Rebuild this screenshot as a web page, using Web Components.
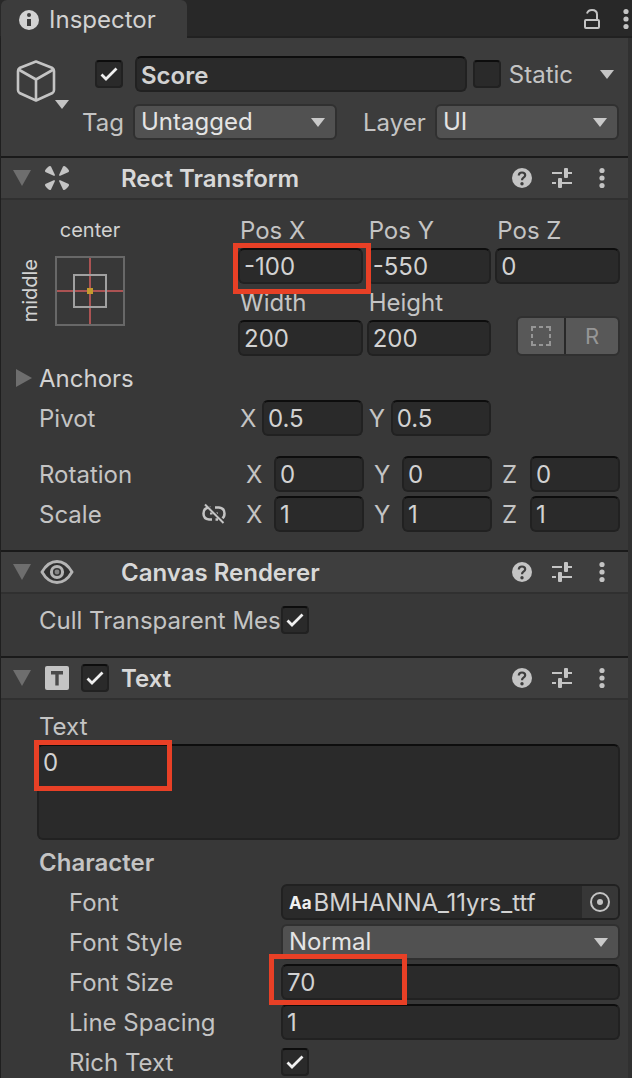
<!DOCTYPE html>
<html lang="en">
<head>
<meta charset="utf-8">
<title>Inspector</title>
<style>
    body {
        margin: 0;
        height: 100vh;
        overflow: hidden;
        background: #383838;
        color: #c4c4c4;
        font: 24px/36px Inter, "Liberation Sans", sans-serif;
    }
</style>
</head>
<body>
<inspector-window></inspector-window>

<script>
const ICONS = {
    info: [20, 20, `<circle cx="10" cy="10" r="10" fill="currentColor"/>
        <path d="M8 9h4v7H8z" fill="#3c3c3c"/><circle cx="10" cy="5" r="2" fill="#3c3c3c"/>`],
    lock: [16, 20, `<path d="M3 4.500Q4 1 8 1Q13 1 13 5.500V10" fill="none" stroke="currentColor" stroke-width="2"/>
        <rect x="1" y="11" width="14" height="8" rx="1" fill="none" stroke="currentColor" stroke-width="2"/>`],
    dots: [20, 20, `<g fill="currentColor"><circle cx="10" cy="2.500" r="2.600"/><circle cx="10" cy="10" r="2.600"/><circle cx="10" cy="17.500" r="2.600"/></g>`],
    cube: [40, 42, `<g fill="none" stroke="currentColor" stroke-width="2.600" stroke-linejoin="round">
        <path d="M21 1.500 37.500 8Q39 9 39 11V30Q39 32 37.500 33L21 40.500 4.500 33Q3 32 3 30V11Q3 9 4.500 8Z"/>
        <path d="M3.500 9.500 21 19.500 38.500 9.500M21 19.500V40"/></g>`],
    caret: [14, 9, `<path d="M0 0H14L7 9Z" fill="currentColor"/>`],
    foldOpen: [18, 16, `<path d="M0 0H18L9 16Z" fill="#6e6e6e"/>`],
    foldClosed: [16, 18, `<path d="M0 0V18L16 9Z" fill="#6e6e6e"/>`],
    rect: [24, 24, `<g fill="currentColor"><path d="M9.300 10 .3 6Q-.8 5 1 3L3 1Q5-.8 6 .5L10 9Z"/>
        <path d="M14.700 10 23.700 6Q24.800 5 23 3L21 1Q19-.8 18 .5L14 9Z"/>
        <path d="M9.300 14 .3 18Q-.8 19 1 21L3 23Q5 24.800 6 23.500L10 15Z"/>
        <path d="M14.700 14 23.700 18Q24.800 19 23 21L21 23Q19 24.800 18 23.500L14 15Z"/></g>`],
    eye: [24, 24, `<g fill="none" stroke="#b4b4b4"><path d="M-3 12Q3 1.500 12 1.500T27 12Q21 22.500 12 22.500T-3 12Z" stroke-width="2.800" fill="#303030"/>
        <circle cx="12" cy="12" r="5.600" stroke-width="3" fill="#383838"/></g><circle cx="12" cy="12" r="2.400" fill="#858585"/>`],
    text: [24, 24, `<rect width="24" height="24" rx="2" fill="currentColor"/><path d="M6 5H18V8.500H13.700V19.500H10.300V8.500H6Z" fill="#4a4a4a"/>`],
    help: [20, 20, `<circle cx="10" cy="10" r="10" fill="currentColor"/>
        <path d="M6.800 7.500Q6.900 4.500 10 4.500T13.200 7.200Q13.200 8.600 11.500 9.700Q10 10.700 10 12.300" fill="none" stroke="#3e3e3e" stroke-width="2.200"/>
        <circle cx="10" cy="15.700" r="1.700" fill="#3e3e3e"/>`],
    sliders: [20, 20, `<g fill="currentColor"><path d="M0 4H10V6H0zM16 4H20V6H16zM0 14H4V16H0zM10 14H20V16H10z"/>
        <rect x="12" y="0" width="4" height="10" rx="1"/><rect x="6" y="10" width="4" height="10" rx="1"/></g>`],
    unlink: [24, 20, `<g fill="none" stroke="currentColor" stroke-width="2.500"><path d="M8.500 3.500H7Q1.500 4 1.500 9.500T7 15.500H10M13 3.500H17Q22.500 4 22.500 9.500Q22.500 13.500 19.500 15M13.500 15.500H16"/>
        <path d="M8 9.500H10.500M13.500 9.500H16" stroke-width="2"/></g>
        <path d="M4.500 .5 23.500 18" stroke="#383838" stroke-width="1.500"/><path d="M3 .5 21.500 19" stroke="currentColor" stroke-width="2"/>`],
    blueprint: [20, 20, `<path d="M1 5V1H5M8 1H12M15 1H19V5M19 8V12M19 15V19H15M12 19H8M5 19H1V15M1 12V8" fill="none" stroke="currentColor" stroke-width="2"/>`],
    target: [20, 20, `<circle cx="10" cy="10" r="9" fill="none" stroke="currentColor" stroke-width="2"/><circle cx="10" cy="10" r="3" fill="currentColor"/>`],
    check: [28, 28, `<path d="M6.500 14.500 11 19 21.500 8.500" fill="none" stroke="#f0f0f0" stroke-width="2.800"/>`]
};

const controlCss = `
    * { box-sizing: border-box; }
    button {
        display: grid;
        place-items: center;
        padding: 0;
        border: 0;
        background: none;
        color: inherit;
        font: inherit;
    }
    input, select, textarea {
        width: 100%;
        min-width: 0;
        height: 36px;
        margin: 0;
        padding: 0 4px;
        border: 2px solid #212121;
        border-top-color: #0d0d0d;
        border-radius: 6px;
        outline: none;
        background: #2a2a2a;
        color: #d2d2d2;
        font: inherit;
        line-height: 32px;
        appearance: none;
    }
    select {
        grid-area: 1 / 1;
        padding: 0 30px 2px 6px;
        border-color: #303030;
        background: #515151;
        color: #e4e4e4;
    }
    textarea {
        display: block;
        height: 96px;
        padding-top: 1px;
        resize: none;
    }
    input[type="checkbox"] {
        grid-area: 1 / 1;
        width: 28px;
        height: 28px;
        padding: 0;
        border-radius: 4px;
    }
    .check { display: grid; width: 28px; align-self: center; }
    .check inspector-icon { grid-area: 1 / 1; visibility: hidden; pointer-events: none; }
    .check input:checked + inspector-icon { visibility: visible; }
`;

class InspectorIcon extends HTMLElement {
    connectedCallback() {
        const [width, height, shapes] = ICONS[this.getAttribute('name')];
        this.attachShadow({ mode: 'open' }).innerHTML = `
            <style>
                :host { display: block; flex: none; width: ${width}px; height: ${height}px; }
                svg { display: block; overflow: visible; }
            </style>
            <svg width="${width}" height="${height}" viewBox="0 0 ${width} ${height}" aria-hidden="true">${shapes}</svg>
        `;
    }
}

// Red frame drawn over the field that it points out
class HighlightFrame extends HTMLElement {
    connectedCallback() {
        this.attachShadow({ mode: 'open' }).innerHTML = `
            <style>
                :host {
                    position: absolute;
                    z-index: 1;
                    top: var(--frame-top, -10px);
                    left: var(--frame-left, -12px);
                    box-sizing: border-box;
                    width: 138px;
                    height: 51px;
                    border: 5px solid #e84026;
                    pointer-events: none;
                }
            </style>
        `;
    }
}

// A caption and its control: type is text (default), area, check, select or object
class InspectorField extends HTMLElement {
    connectedCallback() {
        const label = this.getAttribute('label');
        const hidden = this.hasAttribute('bare');
        this.attachShadow({ mode: 'open' }).innerHTML = `
            <style>
                ${controlCss}
                :host { display: block; min-width: 0; }
                :host([bold]) { font-weight: 600; }
                :host([bold]) input { padding-top: 2px; }
                .field { display: flex; align-items: center; min-height: 36px; }
                :host([stacked]) .field { flex-direction: column; align-items: stretch; }
                .caption {
                    flex: none;
                    width: var(--caption-width, auto);
                    padding-top: 2px;
                    padding-left: var(--caption-indent, 0);
                    line-height: 34px;
                    white-space: nowrap;
                }
                .control { position: relative; display: grid; flex: 1; align-items: center; min-width: 0; }
                .control > inspector-icon { grid-area: 1 / 1; justify-self: end; margin-right: 12px; pointer-events: none; color: #c9c9c9; }
                .object {
                    display: flex;
                    align-items: center;
                    height: 36px;
                    padding-left: 6px;
                    border: 2px solid #212121;
                    border-radius: 6px;
                    background: #2a2a2a;
                }
                .object b { padding-top: 2px; color: #f0f0f0; font-size: 17px; }
                .object input { flex: 1; height: 32px; padding: 2px 2px 0; border: 0; background: none; }
                .object button { flex: none; width: 36px; height: 32px; border-radius: 0 4px 4px 0; background: #373737; }
            </style>
            <label class="field">
                ${hidden ? '' : `<span class="caption">${label}</span>`}
                <span class="control">${this.control(hidden ? `aria-label="${label}"` : '')}<slot></slot></span>
            </label>
        `;
    }

    control(name) {
        const value = this.getAttribute('value') || '';
        switch (this.getAttribute('type')) {
            case 'area':
                return `<textarea ${name}>${value}</textarea>`;
            case 'check':
                return `<span class="check">
                    <input type="checkbox" ${name} ${this.hasAttribute('checked') ? 'checked' : ''}>
                    <inspector-icon name="check"></inspector-icon>
                </span>`;
            case 'select':
                return `<select ${name}><option>${value}</option></select><inspector-icon name="caret"></inspector-icon>`;
            case 'object':
                return `<span class="object"><b>Aa</b><input type="text" value="${value}" readonly>
                    <button type="button" aria-label="Select font"><inspector-icon name="target"></inspector-icon></button></span>`;
            default:
                return `<input type="text" ${name} value="${value}">`;
        }
    }
}

class AnchorPreset extends HTMLElement {
    connectedCallback() {
        this.attachShadow({ mode: 'open' }).innerHTML = `
            <style>
                :host {
                    display: grid;
                    grid-template-columns: 18px 70px;
                    grid-template-rows: 36px 70px;
                    gap: 8px 16px;
                    justify-items: center;
                    align-content: start;
                    padding-left: 20px;
                    color: #d2d2d2;
                    font-size: 20px;
                }
                .horizontal { grid-column: 2; }
                .vertical { writing-mode: vertical-rl; transform: rotate(180deg); line-height: 18px; align-self: center; }
            </style>
            <span class="horizontal">center</span>
            <span class="vertical">middle</span>
            <svg width="70" height="70" viewBox="0 0 70 70" fill="none" stroke-width="2" aria-hidden="true">
                <path d="M2 35H68M35 2V68" stroke="#ab5353"/>
                <rect x="1" y="1" width="68" height="68" stroke="#686868"/>
                <rect x="19" y="19" width="32" height="32" stroke="#a0a0a0"/>
                <rect x="32" y="32" width="6" height="6" fill="#c39a2e"/>
            </svg>
        `;
    }
}

class ComponentSection extends HTMLElement {
    connectedCallback() {
        const title = this.getAttribute('title-text');
        this.attachShadow({ mode: 'open' }).innerHTML = `
            <style>
                ${controlCss}
                :host { display: block; }
                header {
                    display: flex;
                    align-items: center;
                    height: 44px;
                    padding: 0 16px 0 12px;
                    border-top: 2px solid #1a1a1a;
                    border-bottom: 2px solid #303030;
                    background: #3e3e3e;
                }
                .kind { margin-left: 14px; }
                .toggle { width: 28px; margin: 0 12px; }
                h2 { flex: 1; margin: 0; padding-top: 2px; color: #d8d8d8; font-size: 24px; font-weight: 600; }
                .tools { display: flex; gap: 20px; }
            </style>
            <header>
                <button type="button" aria-label="Fold ${title}"><inspector-icon name="foldOpen"></inspector-icon></button>
                <inspector-icon class="kind" name="${this.getAttribute('icon')}"></inspector-icon>
                <div class="toggle"><slot name="toggle"></slot></div>
                <h2>${title}</h2>
                <div class="tools">
                    <button type="button" aria-label="Help"><inspector-icon name="help"></inspector-icon></button>
                    <button type="button" aria-label="Presets"><inspector-icon name="sliders"></inspector-icon></button>
                    <button type="button" aria-label="More"><inspector-icon name="dots"></inspector-icon></button>
                </div>
            </header>
            <slot></slot>
        `;
    }
}

class ObjectHeader extends HTMLElement {
    connectedCallback() {
        this.attachShadow({ mode: 'open' }).innerHTML = `
            <style>
                ${controlCss}
                :host { display: flex; padding: 18px 9px 16px 14px; background: #3c3c3c; }
                .picker { display: flex; align-items: flex-end; align-self: flex-start; width: 67px; height: 53px; }
                .picker .cube { align-self: flex-start; margin-top: 4px; }
                .rows { flex: 1; display: grid; gap: 12px; min-width: 0; }
                .row { display: flex; align-items: center; }
                .name { padding-left: 13px; gap: 6px; }
                .active { margin-right: 6px; }
                .title { flex: 1; }
                .static { display: flex; flex-direction: row-reverse; align-items: center; gap: 8px; }
                .static span:first-child { padding-top: 2px; line-height: 34px; }
                .name button { width: 14px; margin: 0 5px 0 21px; }
                .tag { flex: 255; --caption-width: 51px; }
                .layer { flex: 256; margin-left: 26px; --caption-width: 72px; }
            </style>
            <button class="picker" type="button" aria-label="Icon">
                <inspector-icon class="cube" name="cube"></inspector-icon>
                <inspector-icon name="caret"></inspector-icon>
            </button>
            <div class="rows">
                <div class="row name">
                    <inspector-field class="active" type="check" bare label="Active" checked></inspector-field>
                    <inspector-field class="title" bare bold label="Name" value="Score"></inspector-field>
                    <label class="static">
                        <span>Static</span>
                        <span class="check"><input type="checkbox"><inspector-icon name="check"></inspector-icon></span>
                    </label>
                    <button type="button" aria-label="Static options"><inspector-icon name="caret"></inspector-icon></button>
                </div>
                <div class="row">
                    <inspector-field class="tag" type="select" label="Tag" value="Untagged"></inspector-field>
                    <inspector-field class="layer" type="select" label="Layer" value="UI"></inspector-field>
                </div>
            </div>
        `;
    }
}

class RectTransformBody extends HTMLElement {
    connectedCallback() {
        this.attachShadow({ mode: 'open' }).innerHTML = `
            <style>
                ${controlCss}
                :host { display: grid; gap: 4px; padding: 12px 8px 18px 0; }
                .row { display: flex; }
                .row > :first-child { flex: none; width: 237px; }
                .fields { flex: 1; display: grid; grid-template-columns: repeat(3, 1fr); gap: 0 4px; --caption-indent: 2px; }
                .caption {
                    display: flex;
                    align-items: center;
                    justify-content: space-between;
                    padding: 2px 12px 0 38px;
                    line-height: 34px;
                }
                .caption button { margin-top: -2px; }
                .anchors { display: flex; align-items: center; gap: 7px; padding-left: 15px; color: #d2d2d2; }
                .anchors span { padding-top: 2px; line-height: 34px; }
                .pivot { --caption-width: 24px; --caption-indent: 2px; }
                .axes { --caption-width: 36px; --caption-indent: 8px; gap: 0 2px; }
                .rotation { margin-top: 16px; }
                .modes {
                    display: flex;
                    gap: 2px;
                    align-self: end;
                    justify-self: end;
                    width: 104px;
                    height: 40px;
                    border: 2px solid #303030;
                    border-radius: 6px;
                    background: #282828;
                    overflow: hidden;
                    color: #969696;
                }
                .modes button { flex: 52; background: #585858; font-size: 22px; }
                .modes button:first-child { flex: 46; }
            </style>
            <div class="row">
                <anchor-preset></anchor-preset>
                <div class="fields">
                    <inspector-field stacked label="Pos X" value="-100">
                        <highlight-frame style="--frame-top: -5px; --frame-left: -5px"></highlight-frame>
                    </inspector-field>
                    <inspector-field stacked label="Pos Y" value="-550"></inspector-field>
                    <inspector-field stacked label="Pos Z" value="0"></inspector-field>
                    <inspector-field stacked label="Width" value="200"></inspector-field>
                    <inspector-field stacked label="Height" value="200"></inspector-field>
                    <div class="modes">
                        <button type="button" aria-label="Blueprint mode"><inspector-icon name="blueprint"></inspector-icon></button>
                        <button type="button">R</button>
                    </div>
                </div>
            </div>
            <div class="row">
                <button type="button" class="anchors"><inspector-icon name="foldClosed"></inspector-icon><span>Anchors</span></button>
            </div>
            <div class="row">
                <span class="caption">Pivot</span>
                <div class="fields pivot">
                    <inspector-field label="X" value="0.5"></inspector-field>
                    <inspector-field label="Y" value="0.5"></inspector-field>
                </div>
            </div>
            <div class="row rotation">
                <span class="caption">Rotation</span>
                <div class="fields axes">
                    <inspector-field label="X" value="0"></inspector-field>
                    <inspector-field label="Y" value="0"></inspector-field>
                    <inspector-field label="Z" value="0"></inspector-field>
                </div>
            </div>
            <div class="row">
                <span class="caption">Scale
                    <button type="button" aria-label="Link scale"><inspector-icon name="unlink"></inspector-icon></button>
                </span>
                <div class="fields axes">
                    <inspector-field label="X" value="1"></inspector-field>
                    <inspector-field label="Y" value="1"></inspector-field>
                    <inspector-field label="Z" value="1"></inspector-field>
                </div>
            </div>
        `;
    }
}

class InspectorWindow extends HTMLElement {
    connectedCallback() {
        this.attachShadow({ mode: 'open' }).innerHTML = `
            <style>
                ${controlCss}
                :host { display: flex; flex-direction: column; min-height: 100vh; background: #282828; }
                .bar {
                    display: flex;
                    align-items: center;
                    height: 38px;
                    padding-left: 1px;
                    box-shadow: inset 0 -2px #212121;
                }
                .tab {
                    display: flex;
                    align-items: center;
                    gap: 10px;
                    width: 186px;
                    height: 38px;
                    padding: 2px 0 0 18px;
                    border-radius: 6px 6px 0 0;
                    background: #3c3c3c;
                    color: #d2d2d2;
                }
                .lock { margin-left: auto; }
                .menu { margin: 0 -4px 0 16px; }
                main {
                    flex: 1;
                    border-left: 1px solid #1f1f1f;
                    border-right: 4px solid #303030;
                    background: #383838;
                }
                .renderer { padding: 8px 8px 18px 38px; --caption-width: 242px; }
                .text { display: grid; gap: 4px; padding: 8px 8px 0 36px; }
                .area { --caption-indent: 2px; }
                h3 {
                    margin: 0;
                    padding: 2px 0 0 2px;
                    color: #c4c4c4;
                    font-size: 24px;
                    font-weight: 600;
                    line-height: 34px;
                }
                .settings { display: grid; gap: 4px; padding-left: 32px; --caption-width: 212px; }
            </style>
            <div class="bar">
                <button type="button" class="tab"><inspector-icon name="info"></inspector-icon>Inspector</button>
                <button type="button" class="lock" aria-label="Lock"><inspector-icon name="lock"></inspector-icon></button>
                <button type="button" class="menu" aria-label="Menu"><inspector-icon name="dots"></inspector-icon></button>
            </div>
            <main>
                <object-header></object-header>
                <component-section title-text="Rect Transform" icon="rect">
                    <rect-transform-body></rect-transform-body>
                </component-section>
                <component-section title-text="Canvas Renderer" icon="eye">
                    <div class="renderer">
                        <inspector-field type="check" label="Cull Transparent Mes" checked></inspector-field>
                    </div>
                </component-section>
                <component-section title-text="Text" icon="text">
                    <inspector-field slot="toggle" type="check" bare label="Text enabled" checked></inspector-field>
                    <div class="text">
                        <inspector-field class="area" stacked type="area" label="Text" value="0">
                            <highlight-frame style="--frame-top: -4px; --frame-left: -3px"></highlight-frame>
                        </inspector-field>
                        <h3>Character</h3>
                        <div class="settings">
                            <inspector-field type="object" label="Font" value="BMHANNA_11yrs_ttf"></inspector-field>
                            <inspector-field type="select" label="Font Style" value="Normal"></inspector-field>
                            <inspector-field label="Font Size" value="70"><highlight-frame></highlight-frame></inspector-field>
                            <inspector-field label="Line Spacing" value="1"></inspector-field>
                            <inspector-field type="check" label="Rich Text" checked></inspector-field>
                        </div>
                    </div>
                </component-section>
            </main>
        `;
    }
}

customElements.define('inspector-icon', InspectorIcon);
customElements.define('highlight-frame', HighlightFrame);
customElements.define('inspector-field', InspectorField);
customElements.define('anchor-preset', AnchorPreset);
customElements.define('component-section', ComponentSection);
customElements.define('object-header', ObjectHeader);
customElements.define('rect-transform-body', RectTransformBody);
customElements.define('inspector-window', InspectorWindow);
</script>
</body>
</html>
